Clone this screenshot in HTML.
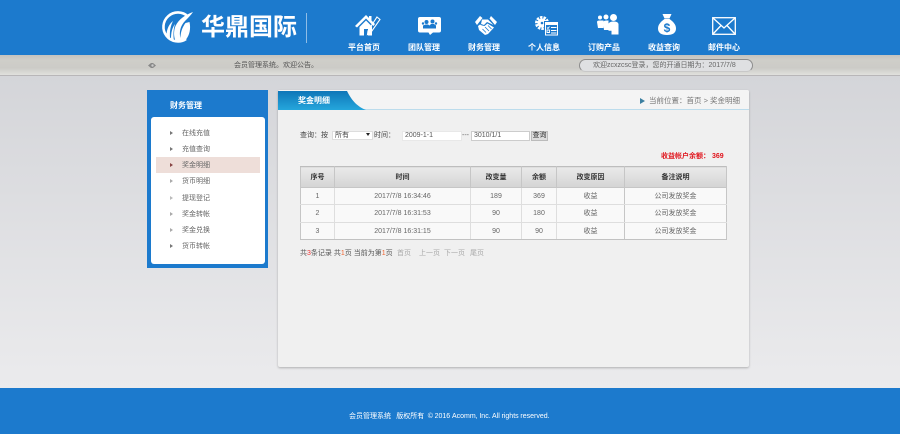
<!DOCTYPE html>
<html><head><meta charset="utf-8"><style>
html,body{margin:0;padding:0}
body{width:900px;height:434px;overflow:hidden;position:relative;font-family:"Liberation Sans","Noto Sans CJK SC",sans-serif;font-size:7px;color:#444;background:#e0e0e3}
#w{position:absolute;left:0;top:0;width:900px;height:434px;overflow:hidden;background:linear-gradient(#d4d5d9 75px,#ebebed 388px);filter:blur(.3px)}
.a{position:absolute;white-space:nowrap;line-height:10px}
.n{position:absolute;top:43px;width:60px;text-align:center;color:#fff;font-weight:bold;font-size:8px;line-height:10px}
svg{position:absolute;overflow:visible}
.m{position:absolute;left:182px;color:#666;line-height:10px;white-space:nowrap}
.t{position:absolute;width:0;height:0;left:170px;border-left:3px solid #777;border-top:2px solid transparent;border-bottom:2px solid transparent}
table{position:absolute;left:300px;top:166px;width:427px;height:74px;border-collapse:collapse;table-layout:fixed;font-size:7px;text-align:center;color:#666}
td,th{padding:1px 0 0;line-height:10px}
th{background:linear-gradient(#e9e9e9,#d4d4d4);color:#333;font-weight:bold;border:1px solid #c6c6c6;border-top-color:#bdbdbd}
td{background:#f9f9f9;border:1px solid #dedede}
tr:last-child td{border-bottom-color:#c2c2c2}
td:first-child,td:last-child{border-left-color:#c6c6c6}
td:last-child{border-right-color:#c6c6c6}
.v{border-left:1px solid #c6c6c6;border-right:1px solid #c6c6c6}
.l{border-left:1px solid #c6c6c6}
.i{position:absolute;background:#fff;border:1px solid #ddd;box-sizing:border-box;height:10px;line-height:8px;padding-left:2px;color:#555;white-space:nowrap}
</style></head><body><div id="w">
<div style="position:absolute;left:0;top:0;width:900px;height:55px;background:#1c7acd"></div>
<div style="position:absolute;left:0;top:55px;width:900px;height:21px;box-sizing:border-box;background:linear-gradient(#c4c3bf,#cfcec9 25%,#cccbc7 65%,#e0e0dd);border-bottom:1px solid #b8b6b8"></div>

<!-- logo -->
<svg style="left:161px;top:11px" width="33" height="33" viewBox="0 0 33 33">
<path d="M27 5.500A14.500 14.500 0 1 0 25 28" fill="none" stroke="#fff" stroke-width="2.600"/>
<path d="M32 1C24 4 18 8 14.500 15C12.500 20 12.500 26 15 31C18 31.500 22 31 25 28.500C28.500 24 30 18 28.500 11L24.500 12C21.500 16 19.500 21 19.500 27C18 22 19 15 24 10C27 7 30 4 32 1Z" fill="#fff"/>
<path d="M5.500 23C6 18 8 13 12 10C9.500 15 8.500 20 9 27L7 26Z" fill="#fff"/>
<path d="M10 28C10 22 11 17 14 13C12.500 18 12 23 13 30Z" fill="#fff"/>
</svg>
<div class="a" style="left:201px;top:14px;font-size:24px;line-height:28px;color:#fff;font-weight:bold">华鼎国际</div>
<div style="position:absolute;left:306px;top:13px;width:1px;height:30px;background:#8fbde6"></div>

<!-- nav icons -->
<svg style="left:355px;top:15px" width="26" height="21" viewBox="0 0 26 21" fill="#fff">
<path d="M0 11L11 0L20 9L18.500 11L11 3.500L2 12.500Z"/><path d="M4.500 12L11 5.500L17 11.500V20.500H13V14H9V20.500H4.500Z"/>
<path d="M22 2L25 4.500L15.500 18L12.500 19.500L13 16Z" fill="none" stroke="#fff" stroke-width="1.100"/><path d="M14 1H16.500V6L14 3.500Z"/>
</svg>
<div class="n" style="left:334px">平台首页</div>
<svg style="left:418px;top:17px" width="23" height="18" viewBox="0 0 23 18">
<path d="M2 0H21Q23 0 23 2V13.500Q23 15.500 21 15.500H15L12 18L10.500 15.500H2Q0 15.500 0 13.500V2Q0 0 2 0Z" fill="#fff"/>
<g fill="#1c7acd"><circle cx="8.500" cy="5" r="2"/><circle cx="14.500" cy="4.500" r="2"/><path d="M5 11.500V8.500L7.500 7.500H10L11.500 8.500L13 7H16L18 8.500V11.500Z"/><circle cx="5" cy="6.500" r="1.200"/><circle cx="18" cy="6.500" r="1.200"/></g>
</svg>
<div class="n" style="left:394px">团队管理</div>
<svg style="left:475px;top:16px" width="22" height="19" viewBox="0 0 22 19" fill="#fff">
<path d="M0 6L5 0L7.500 2L2 9Z"/><path d="M16 0L22 6L20 9L14.500 2.500Z"/>
<path d="M7 3.500H13L18.500 9L12 6L9 9L6 8Z"/><path d="M3 10L5 8.500L7 9.500L9.500 10L12.500 7.500L19 11.500L13 18L10 19L4 14Z"/>
<path d="M7.500 13L11 16.500M10 11L14 15M13 9.500L16.500 13" stroke="#1c7acd" stroke-width=".8"/>
</svg>
<div class="n" style="left:454px">财务管理</div>
<svg style="left:535px;top:15px" width="24" height="21" viewBox="0 0 24 21">
<circle cx="7" cy="8" r="5.500" fill="none" stroke="#fff" stroke-width="3" stroke-dasharray="2.400 1"/>
<circle cx="7" cy="8" r="4.500" fill="#fff"/><circle cx="7" cy="8" r="1.300" fill="#1c7acd"/>
<rect x="9" y="6" width="15" height="15" fill="#1c7acd"/>
<rect x="10.500" y="7.500" width="12" height="12.500" fill="none" stroke="#fff"/><rect x="10.500" y="7.500" width="12" height="2.500" fill="#fff"/>
<path d="M12 12.500L13 13.500L14.500 11.500M16 12.500H21.500M12 15H14.500V17.500H12ZM16 15.500H21.500M16 18H21.500" stroke="#fff" stroke-width=".9" fill="none"/>
</svg>
<div class="n" style="left:514px">个人信息</div>
<svg style="left:597px;top:14px" width="22" height="21" viewBox="0 0 22 21" fill="#fff">
<circle cx="3" cy="3.500" r="2"/><circle cx="9" cy="3" r="2.500"/><circle cx="16.500" cy="3.500" r="3.500"/>
<path d="M0 8Q0 6.500 2.500 6.500H6.500V14H1Z"/><path d="M6 8Q7 6.500 9.500 6.500H11.500V16H7Z"/><path d="M11.500 9.500Q13 7.500 16.500 7.500Q21 7.500 21.500 10V20.500H14.500V16.800L11.500 16.800Z"/>
</svg>
<div class="n" style="left:574px">订购产品</div>
<svg style="left:658px;top:13.500px" width="18" height="21" viewBox="0 0 18 21">
<path d="M4.500 0H13.500L11.500 4.500H6.500Z" fill="#fff"/>
<path d="M6.500 5H11.500C15 7.500 18 10.500 18 14.500C18 19 14.500 21 9 21C3.500 21 0 19 0 14.500C0 10.500 3 7.500 6.500 5Z" fill="#fff"/>
<text x="9" y="18" text-anchor="middle" font-size="12" font-weight="bold" fill="#1c7acd" font-family="Liberation Sans">$</text>
</svg>
<div class="n" style="left:634px">收益查询</div>
<svg style="left:712px;top:17px" width="24" height="18" viewBox="0 0 24 18" fill="none" stroke="#fff" stroke-width="1.300">
<rect x=".7" y=".7" width="22.600" height="16.600"/><path d="M1 1L12 11L23 1M1 17L9 8.500M23 17L15 8.500"/>
</svg>
<div class="n" style="left:694px">邮件中心</div>

<!-- bar -->
<svg style="left:148px;top:62px" width="8" height="7" viewBox="0 0 8 7"><path d="M0 3.500L3 1H5L8 3.500L5 6H3Z" fill="#888"/><circle cx="4.500" cy="3.500" r="1.200" fill="#ccc"/></svg>
<div class="a" style="left:234px;top:61px;color:#555">会员管理系统。欢迎公告。</div>
<div style="position:absolute;left:579px;top:59px;width:174px;height:13px;box-sizing:border-box;border:1px solid #8d8d8d;border-bottom-color:#c8c8c8;border-radius:7px;background:#dfe0e2"></div>
<div class="a" style="left:593px;top:60.500px;color:#666">欢迎zcxzcsc登录，您的开通日期为：2017/7/8</div>

<!-- sidebar -->
<div style="position:absolute;left:147px;top:90px;width:121px;height:178px;background:#1c7acd"></div>
<div class="a" style="left:170px;top:101px;color:#fff;font-weight:bold;font-size:8px">财务管理</div>
<div style="position:absolute;left:151px;top:117px;width:114px;height:147px;background:#fff;border-radius:3px"></div>
<div style="position:absolute;left:156px;top:157px;width:104px;height:16px;background:#eeded9"></div>
<div class="t" style="top:131px"></div><div class="m" style="top:129px">在线充值</div>
<div class="t" style="top:147px"></div><div class="m" style="top:145px">充值查询</div>
<div class="t" style="top:163px;border-left-color:#844"></div><div class="m" style="top:161px">奖金明细</div>
<div class="t" style="top:179px;border-left-color:#aaa"></div><div class="m" style="top:177px">货币明细</div>
<div class="t" style="top:196px;border-left-color:#bbb"></div><div class="m" style="top:194px">提现登记</div>
<div class="t" style="top:212px;border-left-color:#aaa"></div><div class="m" style="top:210px">奖金转帐</div>
<div class="t" style="top:228px;border-left-color:#aaa"></div><div class="m" style="top:226px">奖金兑换</div>
<div class="t" style="top:244px"></div><div class="m" style="top:242px">货币转帐</div>

<!-- main -->
<div style="position:absolute;left:278px;top:90px;width:471px;height:277px;background:#f0f0f0;box-shadow:0 1px 2px rgba(0,0,0,.25);border-radius:2px"></div>
<div style="position:absolute;left:278px;top:90px;width:471px;height:20px;background:#f4f4f4;border-bottom:1px solid #bcdcec;box-sizing:border-box;border-radius:2px 2px 0 0"></div>
<svg style="left:278px;top:91px" width="88" height="19" viewBox="0 0 88 19"><defs><linearGradient id="g" x1="0" y1="0" x2="0" y2="1"><stop offset="0" stop-color="#0f76b8"/><stop offset="1" stop-color="#25a6dc"/></linearGradient></defs><path d="M0 0H69C73 8 78 15 88 19H0Z" fill="url(#g)"/></svg>
<div class="a" style="left:298px;top:96px;color:#fff;font-weight:bold;font-size:8px">奖金明细</div>
<div style="position:absolute;left:640px;top:98px;width:0;height:0;border-left:5px solid #3c7fa0;border-top:3px solid transparent;border-bottom:3px solid transparent"></div>
<div class="a" style="left:649px;top:96px;color:#777;font-size:7.500px">当前位置：首页 &gt; 奖金明细</div>

<!-- form -->
<div class="a" style="left:300px;top:131px;color:#444">查询：按</div>
<div class="i" style="left:332px;top:131px;width:41px;height:9px;border-color:#ddd;color:#444;line-height:8px">所有</div>
<div style="position:absolute;left:366px;top:133px;width:0;height:0;border-top:3px solid #222;border-left:2px solid transparent;border-right:2px solid transparent"></div>
<div class="a" style="left:374px;top:131px;color:#444">时间：</div>
<div class="i" style="left:402px;top:131px;width:60px;border-color:#e8e8e8">2009-1-1</div>
<div class="a" style="left:462px;top:131px;color:#666">---</div>
<div class="i" style="left:471px;top:131px;width:59px;border-color:#ccc">3010/1/1</div>
<div style="position:absolute;left:531px;top:131px;width:17px;height:10px;box-sizing:border-box;background:#ddd;border:1px solid #bbb;text-align:center;line-height:8px;color:#333;white-space:nowrap">查询</div>
<div class="a" style="left:661px;top:152px;color:#e0141c;font-weight:bold">收益帐户余额： 369</div>

<table>
<colgroup><col style="width:34px"><col style="width:136px"><col style="width:51px"><col style="width:35px"><col style="width:68px"><col></colgroup>
<tr style="height:21px"><th>序号</th><th>时间</th><th>改变量</th><th>余额</th><th>改变原因</th><th>备注说明</th></tr>
<tr style="height:17px"><td>1</td><td>2017/7/8 16:34:46</td><td class="l">189</td><td>369</td><td class="v">收益</td><td>公司发放奖金</td></tr>
<tr style="height:18px"><td>2</td><td>2017/7/8 16:31:53</td><td class="l">90</td><td>180</td><td class="v">收益</td><td>公司发放奖金</td></tr>
<tr style="height:17px"><td>3</td><td>2017/7/8 16:31:15</td><td class="l">90</td><td>90</td><td class="v">收益</td><td>公司发放奖金</td></tr>
</table>

<div class="a" style="left:300px;top:249px;color:#555">共<span style="color:#e33">3</span>条记录 共<span style="color:#e63">1</span>页 当前为第<span style="color:#e63">1</span>页</div>
<div class="a" style="left:397px;top:249px;color:#aaa">首页</div>
<div class="a" style="left:419px;top:249px;color:#aaa">上一页</div>
<div class="a" style="left:444px;top:249px;color:#aaa">下一页</div>
<div class="a" style="left:470px;top:249px;color:#aaa">尾页</div>

<!-- footer -->
<div style="position:absolute;left:0;top:388px;width:900px;height:46px;background:#1c7acd"></div>
<div class="a" style="left:349px;top:412px;color:#fff;font-size:7px;word-spacing:-.2px">会员管理系统&nbsp;&nbsp;&nbsp;版权所有&nbsp;&nbsp;© 2016 Acomm, Inc. All rights reserved.</div>
</div></body></html>
